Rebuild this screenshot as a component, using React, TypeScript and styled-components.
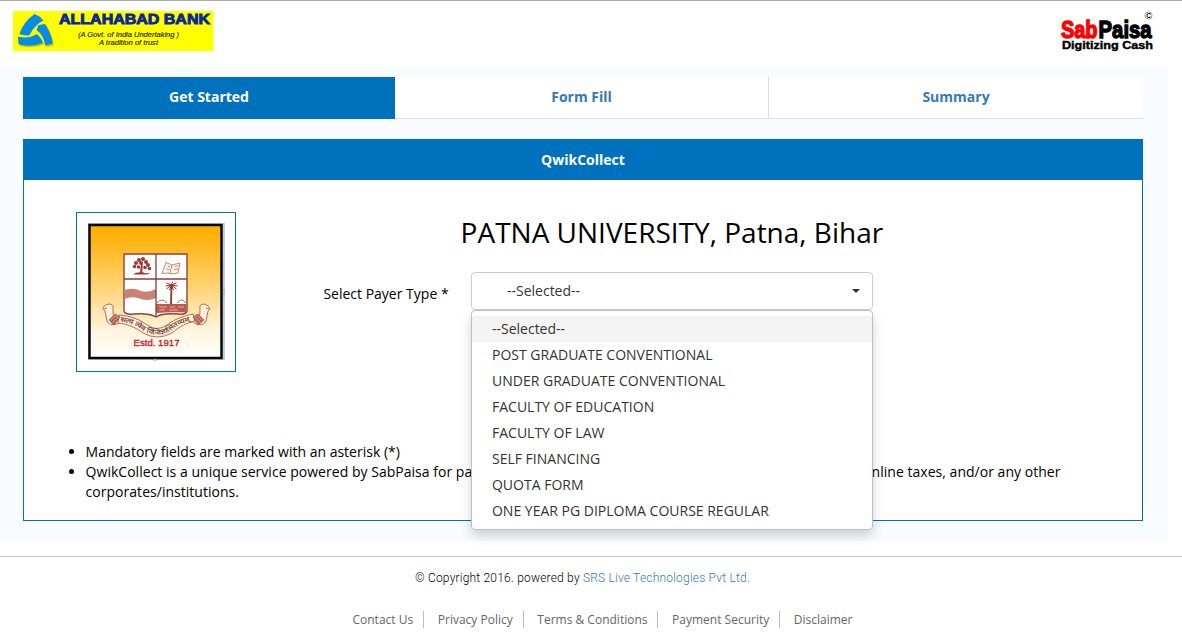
import React from "react";
import styled, { createGlobalStyle } from "styled-components";

const GlobalStyle = createGlobalStyle`
  * { box-sizing: border-box; }
  body {
    margin: 0;
    background: #fff;
    color: #000;
    font: 14px/20px "Open Sans", sans-serif;
    overflow: hidden;
  }
  a { color: #337ab7; text-decoration: none; }
`;

const Page = styled.div`
  height: 638px;
  border-top: 1px solid #aaa;
`;

const Header = styled.header`
  height: 66px;
  display: flex;
  justify-content: space-between;
  padding: 10px 25px 0 13px;
  svg { overflow: visible; }
`;

const Band = styled.main`
  width: 1168px;
  height: 474px;
  background: #f8fbff;
  padding: 10px 25px 20px 23px;
`;

const Tabs = styled.nav`
  height: 42px;
  display: grid;
  grid-template-columns: 372px 374px 374px;
  margin-bottom: 20px;
`;

const Tab = styled.a<{ $active?: boolean; $divided?: boolean }>`
  height: 42px;
  line-height: 40px;
  text-align: center;
  font-weight: 700;
  font-size: 14px;
  color: ${(p) => (p.$active ? "#fff" : "#337ab7")};
  background: ${(p) => (p.$active ? "#0071bc" : "#fff")};
  border-bottom: ${(p) => (p.$active ? "0" : "1px solid #ddd")};
  border-right: ${(p) => (p.$divided ? "1px solid #ddd" : "0")};
`;

const Panel = styled.section`
  height: 382px;
  background: #fff;
  border: 1px solid #0071bc;
`;

const PanelTitle = styled.h2`
  margin: 0;
  height: 40px;
  font-size: 14px;
  line-height: 40px;
  text-align: center;
  color: #fff;
  background: #0071bc;
`;

const Intro = styled.div`
  display: flex;
  height: 262px;
  padding: 32px 0 0 52px;
`;

const CrestFrame = styled.div`
  width: 160px;
  height: 160px;
  border: 1px solid #0071bc;
  padding: 10px;
`;

const Form = styled.div`
  width: 697px;
  margin-left: 87.4px;
`;

const Title = styled.h1`
  margin: 0;
  font-weight: 400;
  font-size: 28px;
  line-height: 40px;
  text-align: center;
`;

const Field = styled.div`
  display: flex;
  margin-top: 20px;
`;

const Label = styled.label`
  width: 147.6px;
  padding-top: 12px;
`;

const Dropdown = styled.div`
  position: relative;
  width: 402px;
`;

const Select = styled.button`
  width: 402px;
  height: 38px;
  display: flex;
  align-items: center;
  justify-content: space-between;
  padding: 0 12px 0 35px;
  background: #fff;
  border: 1px solid #ccc;
  border-radius: 4px;
  color: #333;
  font: 14px/20px "Open Sans", sans-serif;
`;

const Caret = styled.span`
  border-top: 4px solid #333;
  border-left: 4px solid transparent;
  border-right: 4px solid transparent;
`;

const Menu = styled.ul`
  position: absolute;
  top: 38px;
  left: 0;
  width: 402px;
  margin: 0;
  padding: 5px 0;
  list-style: none;
  background: #fff;
  border: 1px solid #bfbfbf;
  border-radius: 4px;
  box-shadow: 0 6px 12px rgba(0, 0, 0, 0.175);
`;

const Option = styled.li<{ $selected?: boolean }>`
  height: 26px;
  padding: 3px 20px;
  color: #333;
  font-size: 14px;
  background: ${(p) => (p.$selected ? "#f4f4f4" : "#fff")};
`;

const Notes = styled.ul`
  margin: 0;
  padding: 0 60px 0 61.6px;
  li + li { letter-spacing: 0.027px; }
`;

const Footer = styled.footer`
  margin-top: 15px;
  border-top: 1px solid #ccc;
  text-align: center;
`;

const Copyright = styled.p`
  margin: 11px 0 23px;
  padding-right: 17px;
  font: 300 12px/20px Roboto, sans-serif;
  letter-spacing: 0.2px;
`;

const FooterLinks = styled.nav`
  display: flex;
  justify-content: center;
  padding-left: 19.4px;
`;

const FooterLink = styled.a`
  height: 17px;
  padding: 0 10px 0 13.6px;
  border-right: 1px solid #bbb;
  color: #666;
  font-size: 12px;
  line-height: 17px;
  &:last-child { border-right: 0; }
`;

const options = [
  "--Selected--",
  "POST GRADUATE CONVENTIONAL",
  "UNDER GRADUATE CONVENTIONAL",
  "FACULTY OF EDUCATION",
  "FACULTY OF LAW",
  "SELF FINANCING",
  "QUOTA FORM",
  "ONE YEAR PG DIPLOMA COURSE REGULAR",
];

const links = ["Contact Us", "Privacy Policy", "Terms & Conditions", "Payment Security", "Disclaimer"];

const BankLogo = () => (
  <svg width="201" height="40" viewBox="0 0 201 40">
    <rect width="200.5" height="40" fill="#ff0" />
    <g transform="translate(1.3 1.3)" fill="#8b9800" opacity=".55">
      <path d="M26 14 32 13Q38 22 39.5 33L32 35Q31 25 24 19Z" />
      <path d="M5 25.7Q17 28 23.5 23.5Q28 26 29.7 32Q18 37 5.5 33.5Z" />
    </g>
    <g fill="#078be9">
      <path d="M21.7 3Q27 5 30.3 9.5L26 12Q20 17 16.3 24.3Q11 25 6.3 23Q11 10 21.7 3Z" />
      <path d="M25.5 14 32 13Q38 22 39.8 32.5L32 34.5Q31 24 23.5 19Z" />
      <path d="M5 25.7Q17 28 23.5 23Q28 26 29.7 32Q18 36.5 5.5 33.3Z" />
    </g>
    <text x="46" y="12.8" textLength="151" lengthAdjust="spacingAndGlyphs" fontFamily="Liberation Sans" fontWeight="700" fontSize="14" fill="#08279b" stroke="#08279b" strokeWidth=".9">ALLAHABAD BANK</text>
    <g fontFamily="Liberation Sans" fontStyle="italic" fontSize="7.6" fill="#222500" stroke="#222500" strokeWidth=".15">
      <text x="65" y="25.8" textLength="101" lengthAdjust="spacingAndGlyphs">(A Govt. of India Undertaking )</text>
      <text x="86" y="34" textLength="59" lengthAdjust="spacingAndGlyphs">A tradition of trust</text>
    </g>
  </svg>
);

const SabPaisaLogo = () => (
  <svg width="97" height="42" viewBox="0 0 97 42">
    <g fontFamily="Liberation Sans" fontWeight="700">
      <g fontSize="24.8" strokeWidth="1.4">
        <text x="1" y="26.6" textLength="36.5" lengthAdjust="spacingAndGlyphs" fill="red" stroke="red">Sab</text>
        <text x="38.6" y="26.6" textLength="53" lengthAdjust="spacingAndGlyphs" stroke="#000">Paisa</text>
      </g>
      <text x="2" y="37.8" fontSize="10.6" textLength="91" lengthAdjust="spacingAndGlyphs" stroke="#000" strokeWidth=".4">Digitizing Cash</text>
      <text x="88.5" y="6.8" fontSize="6.5" textAnchor="middle">C</text>
    </g>
    <circle cx="88.5" cy="4.5" r="3.6" fill="none" stroke="#777" strokeWidth=".7" />
  </svg>
);

const Crest = () => (
  <svg width="138" height="138" viewBox="0 0 138 138">
    <defs>
      <linearGradient id="sky" x1="0" y1="0" x2="0" y2="1">
        <stop offset="0" stopColor="#ffae00" />
        <stop offset=".12" stopColor="#ffb413" />
        <stop offset=".5" stopColor="#ffd67d" />
        <stop offset=".8" stopColor="#fff6df" />
        <stop offset="1" stopColor="#fff" />
      </linearGradient>
      <path id="motto" d="M33 98.5C44 100 50 103 57 108Q70 115 83 108C90 102 98 99 108 97" />
    </defs>
    <path d="M1 0H138V137H1Z" fill="#c4cce0" />
    <rect x="2.5" y="2" width="132" height="133" fill="url(#sky)" stroke="#080808" strokeWidth="2.5" />
    <path d="M136 67h2v3h-2ZM66 136h4v1h-4Z" fill="#fff" stroke="#555" strokeWidth=".5" />
    <path d="M37 31H100V88Q99 92 91 91Q75 90 69 94Q62 90 47 91Q38 92 37 88Z" fill="#fff" stroke="#8e4240" strokeWidth="1.4" />
    <path d="M37.7 67Q46 64 54 68Q62 70 69 66V75Q60 79 51 75Q44 73 37.7 76Z" fill="#c98275" />
    <path d="M69 81H99.5V89.5Q82 89 69 90Z" fill="#b95a4c" />
    <path d="M72 84h8m3 0h5m3 0h6M72 87h6m4 0h9" stroke="#f1c7ba" strokeWidth=".8" fill="none" />
    <path d="M37 56H100M69 31V93" stroke="#85403e" strokeWidth="1.3" />
    <g fill="#a03a30">
      <circle cx="52" cy="37" r="2" /><circle cx="56" cy="36" r="2" /><circle cx="59" cy="39" r="2" />
      <circle cx="49" cy="40" r="2" /><circle cx="54" cy="40" r="2" /><circle cx="61" cy="42" r="2" />
      <circle cx="47.5" cy="43.5" r="1.8" /><circle cx="62.5" cy="45.5" r="1.8" /><circle cx="51.5" cy="44" r="1.8" /><circle cx="58" cy="44.5" r="1.8" />
      <path d="M54 41h1.8l-.5 8 3 1.3 5-.5-3 1.7H46l3-1.7 4-.6Z" />
    </g>
    <path d="m79 39.5 6 2.5 8-2-2 10-7 1-3-1-6 .5Zm6 2.5-2 8M80.5 43l2.5.7M79.5 46l3 .7m5-3.2 4-.8m-4.5 4 4-.8" fill="#fff5e9" stroke="#b06b62" strokeWidth=".8" />
    <g stroke="#963127" fill="none" strokeWidth="1">
      <path d="M84.5 62 84 81" strokeWidth="1.8" />
      <path d="m84.5 62-5-2m5 2-6 1m6-1-5 4m5-4-2 5m2-5 1-3m-1 3 5-2m-5 2 6 1m-6-1 5 4m-5-4 2 5" />
      <path d="M70 80q5-6 10 0m10 0q5-6 9 0" strokeWidth=".7" />
    </g>
    <g fill="#fff0d5" stroke="#a95e50" strokeWidth=".9">
      <path d="M16 86Q16 82 22 81Q27 81 26 86Q25 92 29 96L35 93 36 97 30 101Q22 103 20 98L18 88Z" />
      <path d="M123 86Q122 82 117 81Q112 81 113 86Q114 92 110 96L104 93 103 97 109 101Q117 103 119 98L121 88Z" />
      <path d="M32 92C44 93 52 96 60 102Q70 109 80 102C88 96 96 93 106 91L108 98C99 100 92 104 85 110Q70 118 56 110C48 104 40 101 31 100Z" />
    </g>
    <path d="m22 97 6-6 5 3-6 8ZM117 97l-6-6-5 3 5 8Z" fill="#c4806c" stroke="#984943" strokeWidth=".7" />
    <path d="m24 99 5-5m-3 7 5-5m84 3-5-5m3 7-5-5M17 86l3-1m102 1-3-1" stroke="#8a3d36" strokeWidth=".7" fill="none" />
    <text fontFamily="Noto Sans, sans-serif" fontSize="6.8" fill="#713b39" stroke="#713b39" strokeWidth=".15"><textPath href="#motto" textLength="76" lengthAdjust="spacingAndGlyphs">सत्यं त्वेव विजिज्ञासितव्यम्</textPath></text>
    <text x="46.5" y="123" textLength="46" lengthAdjust="spacingAndGlyphs" fontFamily="Liberation Sans" fontSize="9" fill="#c61a25" stroke="#c61a25" strokeWidth=".3">Estd. 1917</text>
  </svg>
);

export default function App() {
  return (
    <Page>
      <GlobalStyle />
      <Header>
        <BankLogo />
        <SabPaisaLogo />
      </Header>
      <Band>
        <Tabs>
          <Tab $active>Get Started</Tab>
          <Tab $divided>Form Fill</Tab>
          <Tab>Summary</Tab>
        </Tabs>
        <Panel>
          <PanelTitle>QwikCollect</PanelTitle>
          <Intro>
            <CrestFrame><Crest /></CrestFrame>
            <Form>
              <Title>PATNA UNIVERSITY, Patna, Bihar</Title>
              <Field>
                <Label>Select Payer Type *</Label>
                <Dropdown>
                  <Select>--Selected--<Caret /></Select>
                  <Menu>
                    {options.map((option, i) => (
                      <Option key={option} $selected={i === 0}>{option}</Option>
                    ))}
                  </Menu>
                </Dropdown>
              </Field>
            </Form>
          </Intro>
          <Notes>
            <li>Mandatory fields are marked with an asterisk (*)</li>
            <li>
              QwikCollect is a unique service powered by SabPaisa for paying online education fees, online utility bills, subscriptions, online taxes, and/or any other corporates/institutions.
            </li>
          </Notes>
        </Panel>
      </Band>
      <Footer>
        <Copyright>© Copyright 2016. powered by <a>SRS Live Technologies Pvt Ltd.</a></Copyright>
        <FooterLinks>
          {links.map((link) => <FooterLink key={link}>{link}</FooterLink>)}
        </FooterLinks>
      </Footer>
    </Page>
  );
}
